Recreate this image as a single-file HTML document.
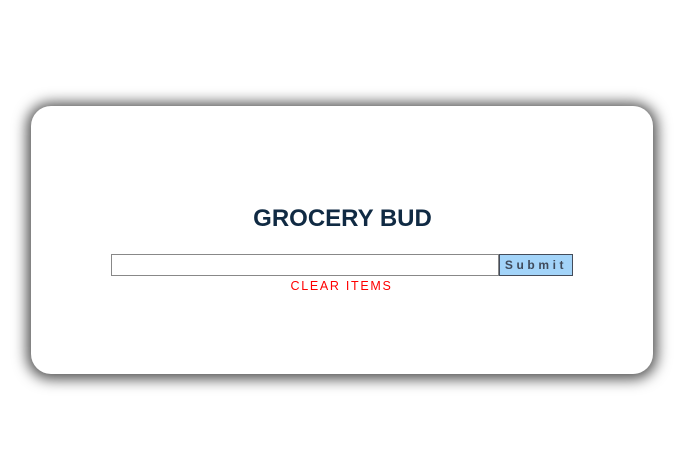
<!DOCTYPE html>
<html><head><style>
html,body{margin:0;padding:0;background:#fff;width:691px;height:476px;overflow:hidden;font-family:"Liberation Sans",sans-serif;}
.card{position:absolute;left:31px;top:106px;width:622px;height:268px;background:#fff;border-radius:20px;box-shadow:0 1px 14px 4px rgba(0,0,0,0.7);}
h1{position:absolute;left:0;width:685px;top:205px;margin:0;text-align:center;font-size:24px;font-weight:bold;color:#102a43;line-height:28px;}
.inp{position:absolute;left:111px;top:254px;width:386px;height:20px;border:1px solid #888;background:#fff;}
.btn{position:absolute;left:499px;top:254px;width:72px;height:20px;border:1px solid #444c5a;background:#a3d4f9;font-size:12px;font-weight:bold;letter-spacing:3.6px;color:#3f4a5a;text-align:center;line-height:21px;box-sizing:content-box;}
.clr{position:absolute;left:0;width:683px;top:278px;text-align:center;color:#f00;font-size:12.5px;letter-spacing:1.7px;line-height:16px;}
</style></head><body>
<div class="card"></div>
<h1>GROCERY BUD</h1>
<div class="inp"></div>
<div class="btn">Submit</div>
<div class="clr">CLEAR ITEMS</div>
</body></html>
